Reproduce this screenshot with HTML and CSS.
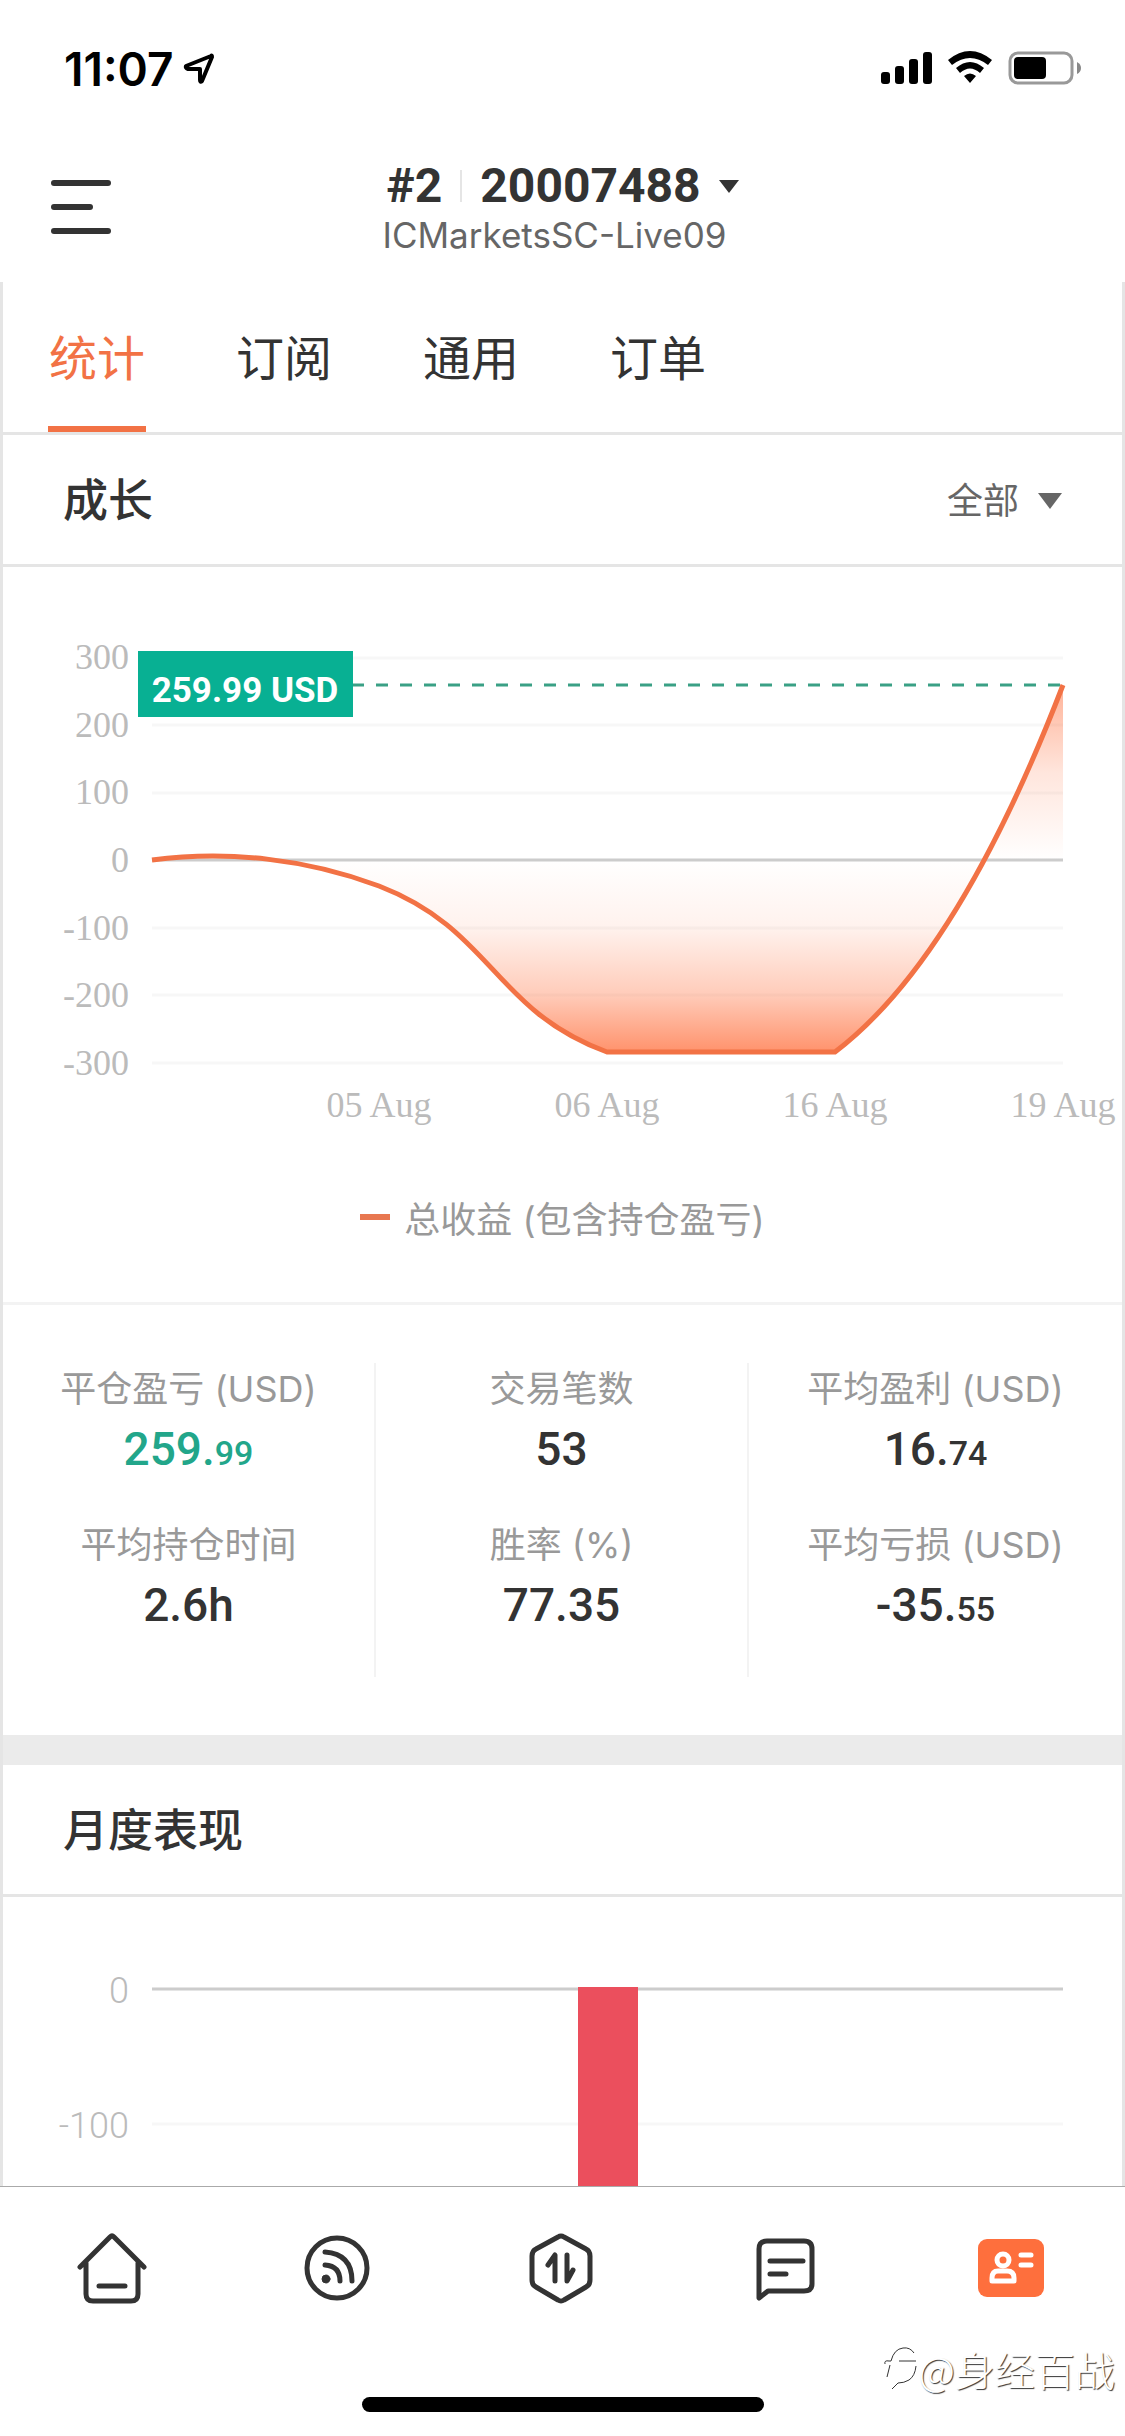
FILE: index.html
```html
<!DOCTYPE html>
<html lang="zh-CN">
<head>
<meta charset="utf-8">
<meta name="viewport" content="width=device-width, initial-scale=1">
<title>统计</title>
<link rel="stylesheet" href="styles.css">
</head>
<body class="app">
<div class="status">
  <div class="status-left">
    <span>11:07</span>
    <svg width="34" height="34" viewBox="0 0 34 34" fill="none" stroke="#000" stroke-width="4" stroke-linejoin="round" aria-hidden="true"><path d="M4 14 29 4Q30 3 30 5L20 29Q18 31 18 28V17H6Q3 16 4 14Z"/></svg>
  </div>
  <svg class="status-icons" width="204" height="36" viewBox="0 0 204 36" aria-hidden="true">
    <rect x="2" y="21" width="9" height="12" rx="3"/><rect x="16" y="15" width="9" height="18" rx="3"/><rect x="30" y="8" width="9" height="25" rx="3"/><rect x="44" y="1" width="9" height="32" rx="3"/>
    <path d="M69 9Q91-9 113 9L109 14Q91 0 73 14ZM77 17Q91 5 105 17L101 22Q91 13 81 22ZM85 25Q91 20 97 25L91 32Z"/>
    <rect x="131" y="2" width="62" height="30" rx="8" fill="none" stroke="#999" stroke-width="3"/>
    <rect x="135" y="6" width="32" height="22" rx="4"/>
    <path d="M198 11Q202 13 202 17T198 23Z" fill="#888"/>
  </svg>
</div>
<header class="header">
  <button class="menu" aria-label="菜单"><span></span><span></span><span></span></button>
  <button class="account">
    <span class="account-id">#2<i class="bar"></i>20007488<i class="caret"></i></span>
    <span class="account-server">ICMarketsSC-Live09</span>
  </button>
</header>
<main class="content">
  <nav class="tabs">
    <a href="#stats" class="tab active">统计</a>
    <a href="#subs" class="tab">订阅</a>
    <a href="#general" class="tab">通用</a>
    <a href="#orders" class="tab">订单</a>
  </nav>
  <section>
    <div class="section-head">
      <h2>成长</h2>
      <label class="range"><select aria-label="范围"><option>全部</option></select><i class="caret caret-grey"></i></label>
    </div>
    <svg class="chart" viewBox="0 0 1119 600" role="img" aria-label="成长">
      <defs>
        <linearGradient id="gain" gradientUnits="userSpaceOnUse" x1="0" y1="118" x2="0" y2="293"><stop offset="0" stop-color="#ff7f52" stop-opacity=".6"/><stop offset=".5" stop-color="#ff7f52" stop-opacity=".2"/><stop offset="1" stop-color="#ff7f52" stop-opacity="0"/></linearGradient>
        <linearGradient id="loss" gradientUnits="userSpaceOnUse" x1="0" y1="293" x2="0" y2="485"><stop offset="0" stop-color="#ff7f52" stop-opacity="0"/><stop offset=".35" stop-color="#ff7f52" stop-opacity=".1"/><stop offset=".7" stop-color="#ff7f52" stop-opacity=".4"/><stop offset="1" stop-color="#ff7f52" stop-opacity=".85"/></linearGradient>
        <clipPath id="above"><rect x="149" y="100" width="912" height="193"/></clipPath>
        <clipPath id="below"><rect x="149" y="293" width="912" height="220"/></clipPath>
      </defs>
      <path class="grid" d="M149 91H1060M149 158H1060M149 226H1060M149 361H1060M149 428H1060M149 496H1060"/>
      <path class="zero" d="M149 293H1060"/>
      <g class="y-axis">
        <text x="126" y="102">300</text><text x="126" y="170">200</text><text x="126" y="237">100</text><text x="126" y="305">0</text><text x="126" y="373">-100</text><text x="126" y="440">-200</text><text x="126" y="508">-300</text>
      </g>
      <path clip-path="url(#above)" fill="url(#gain)" d="M149 293C225 283 304 292 376 319 490 363 490 443 604 485H832C911 425 988 305 1060 118V293Z"/>
      <path clip-path="url(#below)" fill="url(#loss)" d="M149 293C225 283 304 292 376 319 490 363 490 443 604 485H832C911 425 988 305 1060 118V293Z"/>
      <path class="mark" d="M349 118H1060"/>
      <path class="line" d="M149 293C225 283 304 292 376 319 490 363 490 443 604 485H832C911 425 988 305 1060 118"/>
      <rect x="135" y="84" width="215" height="66" fill="#08b093"/>
      <text class="mark-label" x="242" y="135">259.99 USD</text>
      <g class="x-axis">
        <text x="376" y="550">05 Aug</text><text x="604" y="550">06 Aug</text><text x="832" y="550">16 Aug</text><text x="1060" y="550">19 Aug</text>
      </g>
    </svg>
    <div class="legend"><i></i>总收益 (包含持仓盈亏)</div>
    <div class="stats">
      <div class="stat-col">
        <div class="stat"><span class="name">平仓盈亏 (USD)</span><strong class="up">259.<small>99</small></strong></div>
        <div class="stat"><span class="name">平均持仓时间</span><strong>2.6h</strong></div>
      </div>
      <div class="stat-col">
        <div class="stat"><span class="name">交易笔数</span><strong>53</strong></div>
        <div class="stat"><span class="name">胜率 (%)</span><strong>77.35</strong></div>
      </div>
      <div class="stat-col">
        <div class="stat"><span class="name">平均盈利 (USD)</span><strong>16.<small>74</small></strong></div>
        <div class="stat"><span class="name">平均亏损 (USD)</span><strong>-35.<small>55</small></strong></div>
      </div>
    </div>
  </section>
  <section class="monthly">
    <div class="section-head"><h2>月度表现</h2></div>
    <svg class="chart" viewBox="0 0 1119 500" role="img" aria-label="月度表现">
      <path class="grid" d="M149 227H1060M149 362H1060"/>
      <path class="zero" d="M149 92H1060"/>
      <g class="y-axis sans"><text x="126" y="106">0</text><text x="126" y="241">-100</text></g>
      <rect x="575" y="90" width="60" height="390" fill="#eb4f5d"/>
    </svg>
  </section>
</main>
<footer class="footer">
  <nav class="dock">
    <a href="#home" aria-label="首页"><svg width="80" height="80" viewBox="0 0 80 80"><path d="M8 39 38 9Q40 7 42 9L72 39M14 35V66Q14 73 21 73H59Q66 73 66 66V35M27 58H53"/></svg></a>
    <a href="#feed" aria-label="动态"><svg width="80" height="80" viewBox="0 0 80 80"><circle cx="40" cy="40" r="30"/><path d="M28 24Q55 26 55 53M28 37Q43 38 43 53"/><circle cx="29" cy="51" r="4" class="solid"/></svg></a>
    <a href="#trade" aria-label="交易"><svg width="80" height="80" viewBox="0 0 80 80"><path d="M37 9Q40 7 43 9L65 21Q69 23 69 28V52Q69 57 65 59L43 72Q40 74 37 72L15 59Q11 57 11 52V28Q11 23 15 21ZM27 37 34 27V53M46 27V53L52 42"/></svg></a>
    <a href="#chat" aria-label="消息"><svg width="80" height="80" viewBox="0 0 80 80"><path d="M13 70V21Q13 13 21 13H58Q66 13 66 21V56Q66 63 58 63H22ZM24 33H57M24 46H40"/></svg></a>
    <a href="#me" aria-label="账户"><svg width="80" height="80" viewBox="0 0 80 80"><rect class="card" x="7" y="11" width="66" height="58" rx="9"/><g class="white"><circle cx="32" cy="32" r="6"/><path d="M21 53V50Q21 43 27 43H36Q43 43 43 50V53ZM50 27H60M50 37H60"/></g></svg></a>
  </nav>
  <div class="home-bar"></div>
  <div class="watermark"><svg width="36" height="46" viewBox="0 0 36 46" fill="none" stroke="#333" stroke-width="1" aria-hidden="true"><path d="M4 31 7 19M2 18Q1 14 6 15H8Q11 3 20 2 27 1 31 7M16 15H33M33 20Q32 30 26 34 21 37 15 37L9 43"/></svg><span>@身经百战</span></div>
</footer>
</body>
</html>
```
FILE: styles.css
```css
* { box-sizing: border-box; }

.app {
  margin: 0;
  height: 100vh;
  display: flex;
  flex-direction: column;
  background: #fff;
  color: #333;
  font-family: Inter, "Noto Sans CJK SC", sans-serif;
  font-size: 36px;
}

button, select {
  border: 0;
  padding: 0;
  background: none;
  color: inherit;
  font: inherit;
  appearance: none;
}

a { color: inherit; text-decoration: none; }

.status {
  display: flex;
  justify-content: space-between;
  align-items: center;
  height: 138px;
  padding: 0 42px 0 64px;
  color: #000;
  font-size: 46px;
  font-weight: 600;
}

.status-left { display: flex; align-items: center; gap: 8px; }

.header {
  display: grid;
  grid-template-columns: 1fr auto 1fr;
  align-items: center;
  height: 144px;
  padding: 0 51px 6px;
}

.menu {
  display: flex;
  flex-direction: column;
  gap: 18px;
  width: 60px;
}

.menu span { height: 6px; border-radius: 3px; background: #333; }
.menu span:nth-child(2) { width: 42px; }

.account { display: flex; flex-direction: column; align-items: center; }

.account-id {
  display: flex;
  align-items: center;
  font: 700 48px/56px Roboto, sans-serif;
}

.bar { width: 2px; height: 32px; margin: 0 18px; background: #e5e5e5; }

.caret {
  margin-left: 18px;
  border: 10px solid transparent;
  border-top: 13px solid #333;
  border-bottom: 0;
}

.caret-grey { border-width: 16px 12px 0; border-top-color: #666; }

.account-server { padding-right: 16px; color: #666; font-size: 35px; line-height: 42px; }

.content {
  flex: 1;
  min-height: 0;
  overflow: hidden;
  border: 3px solid #e5e5e5;
  border-width: 0 3px;
}

.tabs {
  display: flex;
  gap: 89px;
  height: 153px;
  padding: 0 45px;
  border-bottom: 3px solid #e5e5e5;
}

.tab {
  width: 98px;
  border-bottom: 6px solid transparent;
  font-size: 48px;
  line-height: 154px;
  text-align: center;
}

.tab.active { color: #f27245; border-color: #f27245; }

.section-head {
  display: flex;
  align-items: center;
  justify-content: space-between;
  height: 132px;
  padding: 3px 60px 0;
  border-bottom: 3px solid #e5e5e5;
}

h2 { margin: 0; font-size: 45px; font-weight: 500; line-height: 64px; }

.range { display: flex; align-items: center; color: #666; }

.chart { display: block; width: 100%; }
.grid, .zero, .mark, .line { fill: none; stroke-width: 3; }
.grid { stroke: #f7f7f7; }
.zero { stroke: #ccc; }
.mark { stroke: #3aa085; stroke-dasharray: 12; }
.line { stroke: #f27245; stroke-width: 5; }
.y-axis, .x-axis { fill: #bbb; font: 36px "Liberation Serif", serif; }
.y-axis { text-anchor: end; }
.x-axis { text-anchor: middle; }
.sans { font: 300 36px Roboto, sans-serif; }
.mark-label { fill: #fff; font: 700 35px Roboto, sans-serif; text-anchor: middle; }

.legend {
  display: flex;
  align-items: center;
  justify-content: center;
  height: 138px;
  padding-bottom: 36px;
  border-bottom: 3px solid #f3f3f3;
  color: #999;
}

.legend i { width: 30px; height: 6px; margin-right: 14px; background: #e87750; }

.stats { display: grid; grid-template-columns: repeat(3, 1fr); padding: 58px 0; }
.stat-col { height: 314px; }
.stat-col:not(:last-child) { border-right: 2px solid #f3f3f3; }

.stat {
  display: flex;
  flex-direction: column;
  align-items: center;
  height: 156px;
}

.name { color: #999; line-height: 52px; }
strong { font: 500 46px/68px Roboto, sans-serif; }
small { font-size: 34px; }
.up { color: #22a68a; }

.monthly { border-top: 30px solid #ebebeb; }

.footer { position: relative; border-top: 1px solid #aaa; }

.dock { display: flex; padding: 41px 2px 0 0; }
.dock a { flex: 1; display: flex; justify-content: center; }

.dock svg {
  fill: none;
  stroke: #333;
  stroke-width: 5;
  stroke-linecap: round;
  stroke-linejoin: round;
}

.dock .solid { fill: #333; stroke-width: 1; }
.dock .card { fill: #fe6f3d; stroke: none; }
.dock .white { stroke: #fff; }

.home-bar {
  width: 402px;
  height: 15px;
  margin: 89px auto 24px;
  border-radius: 8px;
  background: #000;
}

.watermark {
  position: absolute;
  right: 10px;
  bottom: 37px;
  display: flex;
  align-items: center;
  color: #fff;
  font: 300 40px/60px "Noto Sans CJK SC", sans-serif;
  text-shadow: 1px 1px 1px #333;
}
```
